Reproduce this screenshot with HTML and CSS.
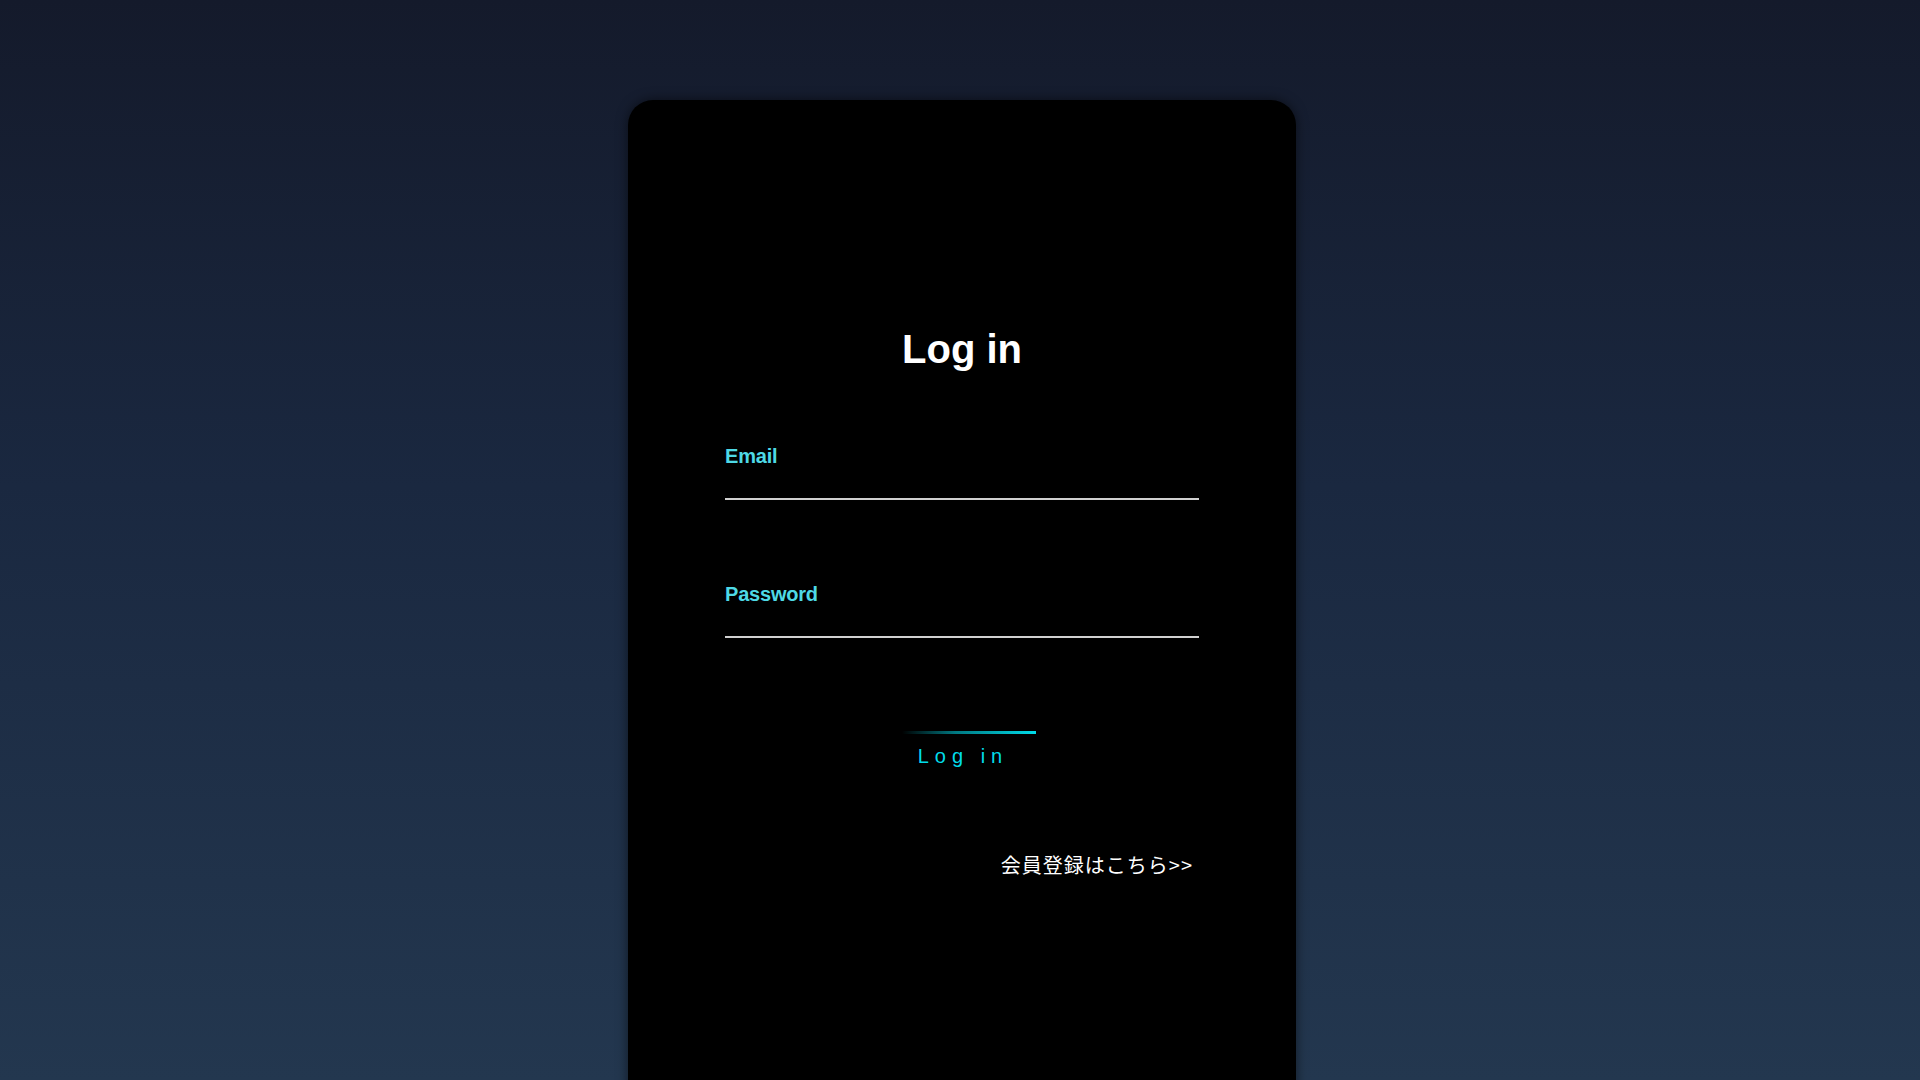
FILE: index.html
```html
<!DOCTYPE html>
<html lang="ja">
<head>
<meta charset="utf-8">
<title>Log in</title>
<link rel="stylesheet" href="styles.css">
</head>
<body>
<main class="page">
  <section class="card">
    <h1 class="title">Log in</h1>
    <form class="form">
      <div class="field field-email">
        <label class="label" for="email">Email</label>
        <input class="input" id="email" type="email">
      </div>
      <div class="field field-password">
        <label class="label" for="password">Password</label>
        <input class="input" id="password" type="password">
      </div>
      <div class="actions">
        <button class="btn" type="button">Log in</button>
      </div>
      <div class="register">
        <a class="register-link" href="#">会員登録はこちら&gt;&gt;</a>
      </div>
    </form>
  </section>
</main>
</body>
</html>
```
FILE: styles.css
```css
* { box-sizing: border-box; }
html, body {
  margin: 0;
  padding: 0;
  height: 100%;
}
body {
  background: linear-gradient(to bottom, #141a2b 0%, #1a2840 45%, #23374f 100%);
  font-family: "Liberation Sans", "Noto Sans CJK JP", sans-serif;
  overflow: hidden;
}
.page {
  height: 1080px;
  display: flex;
  justify-content: center;
  padding-top: 100px;
  padding-left: 4px;
}
.card {
  width: 668px;
  height: 1000px;
  background: #000;
  border-radius: 25px 25px 0 0;
  box-shadow: 0 0 12px rgba(0, 0, 0, 0.55);
  padding: 225px 97px 0;
}
.title {
  margin: 0;
  color: #fff;
  font-size: 40px;
  line-height: 48px;
  font-weight: bold;
  text-align: center;
}
.form {
  display: flex;
  flex-direction: column;
}
.field {
  display: flex;
  flex-direction: column;
}
.field-email { margin-top: 71px; }
.field-password { margin-top: 82px; }
.label {
  color: #4ed9e6;
  font-size: 20px;
  line-height: 24px;
  font-weight: bold;
  letter-spacing: -0.2px;
}
.input {
  height: 32px;
  background: transparent;
  border: none;
  border-bottom: 2px solid #d0d0d0;
  outline: none;
  color: #fff;
  font-size: 18px;
  padding: 0;
}
.actions {
  margin-top: 93px;
  display: flex;
  justify-content: center;
}
.btn {
  position: relative;
  background: transparent;
  border: none;
  color: #00dcea;
  font-family: "Liberation Sans", sans-serif;
  font-size: 20px;
  line-height: 24px;
  letter-spacing: 6px;
  padding: 13px 24px 0 26px;
  cursor: pointer;
}
.btn::before {
  content: "";
  position: absolute;
  top: 0;
  left: 10px;
  width: 134px;
  height: 3px;
  background: linear-gradient(to right, rgba(0, 220, 234, 0) 0%, rgba(0, 200, 215, 0.6) 40%, #00dcea 100%);
}
.register {
  margin-top: 85px;
  display: flex;
  justify-content: flex-end;
  padding-right: 6px;
}
.register-link {
  color: #fff;
  text-decoration: none;
  font-family: "Noto Sans CJK JP", sans-serif;
  font-size: 20px;
  line-height: 24px;
  letter-spacing: 1px;
}
```
